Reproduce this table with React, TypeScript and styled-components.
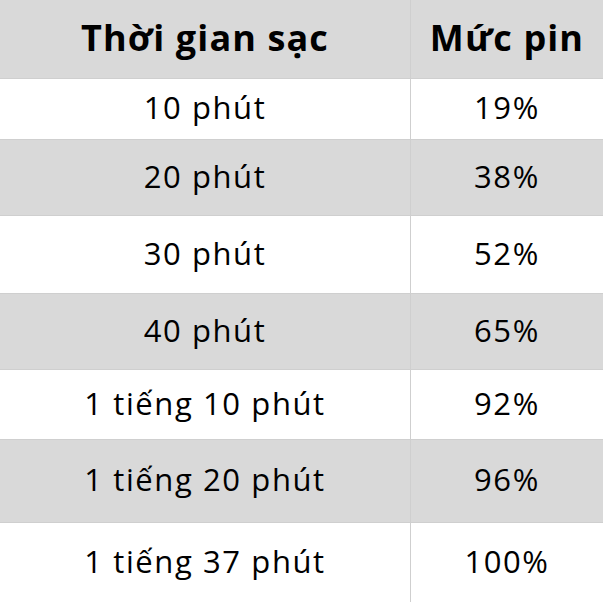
import React from "react";
import styled, { createGlobalStyle } from "styled-components";

const Global = createGlobalStyle`
  html, body { margin: 0; padding: 0; background: #ffffff; }
  body { font-family: "Open Sans", "Noto Sans", sans-serif; }
`;

const Table = styled.div`
  width: 603px;
  display: grid;
  grid-template-columns: 411px 1fr;
`;

const Cell = styled.div<{ $shade: boolean; $h: number; $head?: boolean; $last?: boolean }>`
  height: ${(p) => p.$h}px;
  box-sizing: border-box;
  padding-bottom: 4px;
  background: ${(p) => (p.$shade ? "#d9d9d9" : "#ffffff")};
  border-bottom: ${(p) => (p.$last ? "none" : "1px solid #cfcfcf")};
  display: flex;
  align-items: center;
  justify-content: center;
  color: #000;
  font-size: ${(p) => (p.$head ? 36 : 31)}px;
  font-weight: ${(p) => (p.$head ? 700 : 400)};
  letter-spacing: ${(p) => (p.$head ? "1.1px" : "1.6px")};
  white-space: nowrap;
`;

const LeftCell = styled(Cell)`
  border-right: 1px solid #cfcfcf;
`;

const rows: [string, string, number][] = [
  ["10 phút", "19%", 61],
  ["20 phút", "38%", 76],
  ["30 phút", "52%", 78],
  ["40 phút", "65%", 76],
  ["1 tiếng 10 phút", "92%", 70],
  ["1 tiếng 20 phút", "96%", 83],
  ["1 tiếng 37 phút", "100%", 79],
];

export default function App() {
  return (
    <>
      <Global />
      <Table>
        <LeftCell $shade $h={79} $head>Thời gian sạc</LeftCell>
        <Cell $shade $h={79} $head>Mức pin</Cell>
        {rows.map(([a, b, h], i) => (
          <React.Fragment key={a}>
            <LeftCell $shade={i % 2 === 1} $h={h} $last={i === rows.length - 1}>{a}</LeftCell>
            <Cell $shade={i % 2 === 1} $h={h} $last={i === rows.length - 1}>{b}</Cell>
          </React.Fragment>
        ))}
      </Table>
    </>
  );
}
